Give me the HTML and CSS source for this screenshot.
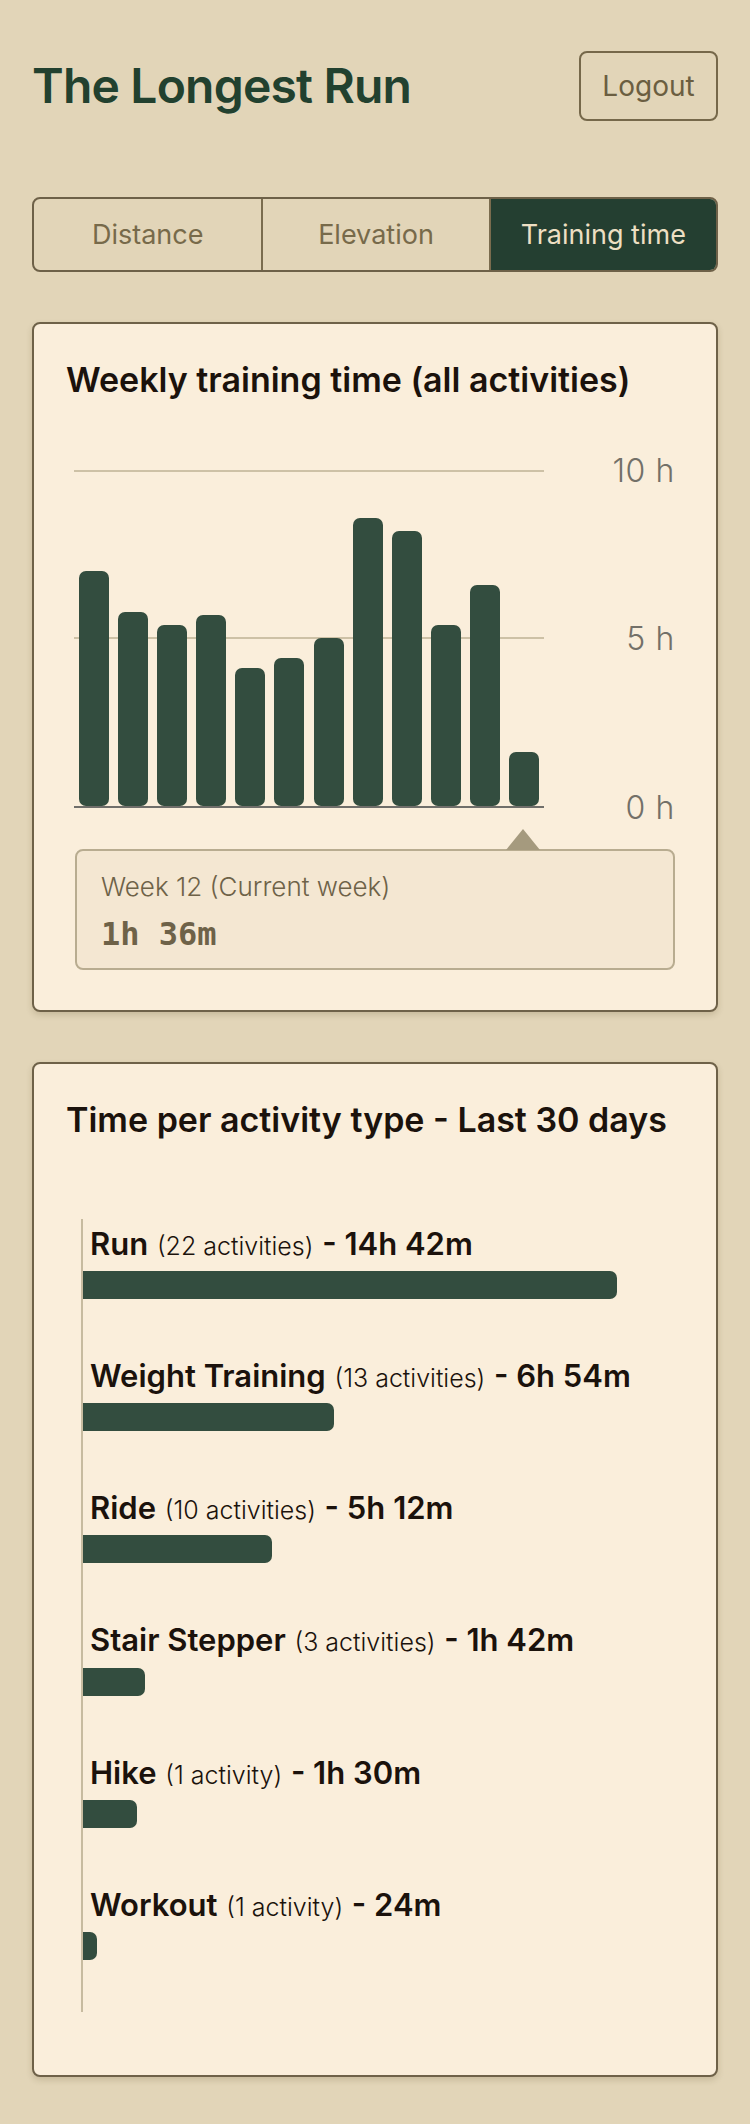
FILE: index.html
```html
<!DOCTYPE html>
<html lang="en">
<head>
	<meta charset="utf-8">
	<meta name="viewport" content="width=device-width, initial-scale=1">
	<title>The Longest Run</title>
	<link rel="stylesheet" href="styles.css">
</head>
<body>
	<header class="topbar">
		<h1 class="brand">The Longest Run</h1>
		<button class="logout">Logout</button>
	</header>

	<nav class="tabs">
		<button class="tab">Distance</button>
		<button class="tab">Elevation</button>
		<button class="tab tab-active">Training time</button>
	</nav>

	<section class="card">
		<h2 class="card-title">Weekly training time (all activities)</h2>

		<div class="chart">
			<div class="plot">
				<div class="gridline gridline-top"></div>
				<div class="gridline gridline-mid"></div>
				<div class="bars">
					<div class="bar" style="height: 70%"></div>
					<div class="bar" style="height: 58%"></div>
					<div class="bar" style="height: 54%"></div>
					<div class="bar" style="height: 57%"></div>
					<div class="bar" style="height: 41%"></div>
					<div class="bar" style="height: 44%"></div>
					<div class="bar" style="height: 50%"></div>
					<div class="bar" style="height: 86%"></div>
					<div class="bar" style="height: 82%"></div>
					<div class="bar" style="height: 54%"></div>
					<div class="bar" style="height: 66%"></div>
					<div class="bar" style="height: 16%"></div>
				</div>
			</div>
			<div class="axis">
				<span>10 h</span>
				<span>5 h</span>
				<span>0 h</span>
			</div>
		</div>

		<div class="tooltip">
			<span class="tooltip-arrow"></span>
			<p class="tooltip-week">Week 12 (Current week)</p>
			<p class="tooltip-value">1h 36m</p>
		</div>
	</section>

	<section class="card">
		<h2 class="card-title">Time per activity type - Last 30 days</h2>

		<div class="activities">
			<div class="activity">
				<p class="activity-label"><b>Run</b> <span>(22 activities)</span> <b>- 14h 42m</b></p>
				<div class="activity-bar" style="width: 88.9%"></div>
			</div>
			<div class="activity">
				<p class="activity-label"><b>Weight Training</b> <span>(13 activities)</span> <b>- 6h 54m</b></p>
				<div class="activity-bar" style="width: 41.7%"></div>
			</div>
			<div class="activity">
				<p class="activity-label"><b>Ride</b> <span>(10 activities)</span> <b>- 5h 12m</b></p>
				<div class="activity-bar" style="width: 31.4%"></div>
			</div>
			<div class="activity">
				<p class="activity-label"><b>Stair Stepper</b> <span>(3 activities)</span> <b>- 1h 42m</b></p>
				<div class="activity-bar" style="width: 10.3%"></div>
			</div>
			<div class="activity">
				<p class="activity-label"><b>Hike</b> <span>(1 activity)</span> <b>- 1h 30m</b></p>
				<div class="activity-bar" style="width: 9%"></div>
			</div>
			<div class="activity">
				<p class="activity-label"><b>Workout</b> <span>(1 activity)</span> <b>- 24m</b></p>
				<div class="activity-bar" style="width: 2.4%"></div>
			</div>
		</div>
	</section>
</body>
</html>
```

FILE: styles.css
```css
body {
	font-family: 'Inter', 'Noto Sans', sans-serif;
	background-color: #e2d5b8;
	margin: 0;
	padding: 51px 32px 48px;
	color: #1b120c;
}

.topbar {
	display: flex;
	justify-content: space-between;
	align-items: center;
}

.brand {
	margin: 0;
	font-size: 48px;
	font-weight: 600;
	line-height: 1.2;
	letter-spacing: -0.8px;
	color: #22412f;
}

.logout {
	width: 139px;
	height: 70px;
	background: transparent;
	border: 2px solid #76684a;
	border-radius: 8px;
	font-family: inherit;
	font-size: 28px;
	color: #6b5e41;
}

.tabs {
	display: grid;
	grid-template-columns: repeat(3, 1fr);
	margin-top: 76px;
	height: 75px;
	border: 2px solid #6e6148;
	border-radius: 8px;
	overflow: hidden;
	box-sizing: border-box;
}

.tab {
	background: transparent;
	border: 0;
	border-left: 2px solid #7a6c4e;
	font-family: inherit;
	font-size: 27px;
	color: #776a4a;
}

.tab:first-child {
	border-left: 0;
}

.tab-active {
	background-color: #243f31;
	color: #eddfc3;
}

.card {
	margin-top: 50px;
	padding: 36px 32px 40px;
	background-color: #faeedb;
	border: 2px solid #6e6148;
	border-radius: 8px;
	box-shadow: 0 3px 6px rgba(80, 60, 20, 0.18);
}

.card-title {
	margin: 0;
	font-size: 34px;
	font-weight: 600;
	line-height: 1.2;
}

/* weekly bar chart */
.chart {
	display: flex;
	margin-top: 70px;
	padding: 0 9px 0 8px;
}

.plot {
	position: relative;
	flex: 1;
	height: 335px;
	border-bottom: 2px solid #6f6e6a;
}

.gridline {
	position: absolute;
	left: 0;
	right: 0;
	height: 2px;
	background-color: #cdc1a6;
}

.gridline-top {
	top: -1px;
}

.gridline-mid {
	top: calc(50% - 1px);
}

.bars {
	position: relative;
	display: flex;
	justify-content: space-around;
	align-items: flex-end;
	height: 100%;
}

.bar {
	width: 30px;
	background-color: #334d3f;
	border-radius: 7px;
}

.axis {
	display: flex;
	flex-direction: column;
	justify-content: space-between;
	align-items: flex-end;
	width: 131px;
	font-size: 32px;
	font-weight: 300;
	line-height: 36px;
	letter-spacing: 0.6px;
	color: #737068;
}

.axis span:first-child {
	margin-top: -18px;
}

.axis span:last-child {
	margin-bottom: -18px;
}

.tooltip {
	position: relative;
	margin: 41px 9px 0;
	padding: 20px 24px 15px;
	background-color: #f4e7d2;
	border: 2px solid #b8ac90;
	border-radius: 8px;
}

.tooltip-arrow {
	position: absolute;
	left: 429px;
	top: -22px;
	width: 0;
	height: 0;
	border-left: 17.5px solid transparent;
	border-right: 17.5px solid transparent;
	border-bottom: 21px solid #a59a7e;
}

.tooltip-week {
	margin: 0;
	font-size: 26px;
	font-weight: 300;
	line-height: 1.2;
	color: #6e6248;
}

.tooltip-value {
	margin: 13px 0 0;
	font-family: 'DejaVu Sans Mono', monospace;
	font-size: 32px;
	font-weight: bold;
	color: #6e6248;
}

/* activity breakdown */
.activities {
	display: flex;
	flex-direction: column;
	gap: 58px;
	margin: 78px 0 23px 15px;
	padding: 6px 0 52px;
	border-left: 2px solid #c7bba0;
}

.activity-label {
	margin: 0;
	padding-left: 7px;
	font-size: 31px;
	line-height: 1.2;
}

.activity-label b {
	font-weight: 600;
}

.activity-label span {
	font-size: 25px;
	font-weight: 300;
}

.activity-bar {
	height: 28px;
	margin-top: 9px;
	background-color: #334d3f;
	border-radius: 0 7px 7px 0;
}
```
